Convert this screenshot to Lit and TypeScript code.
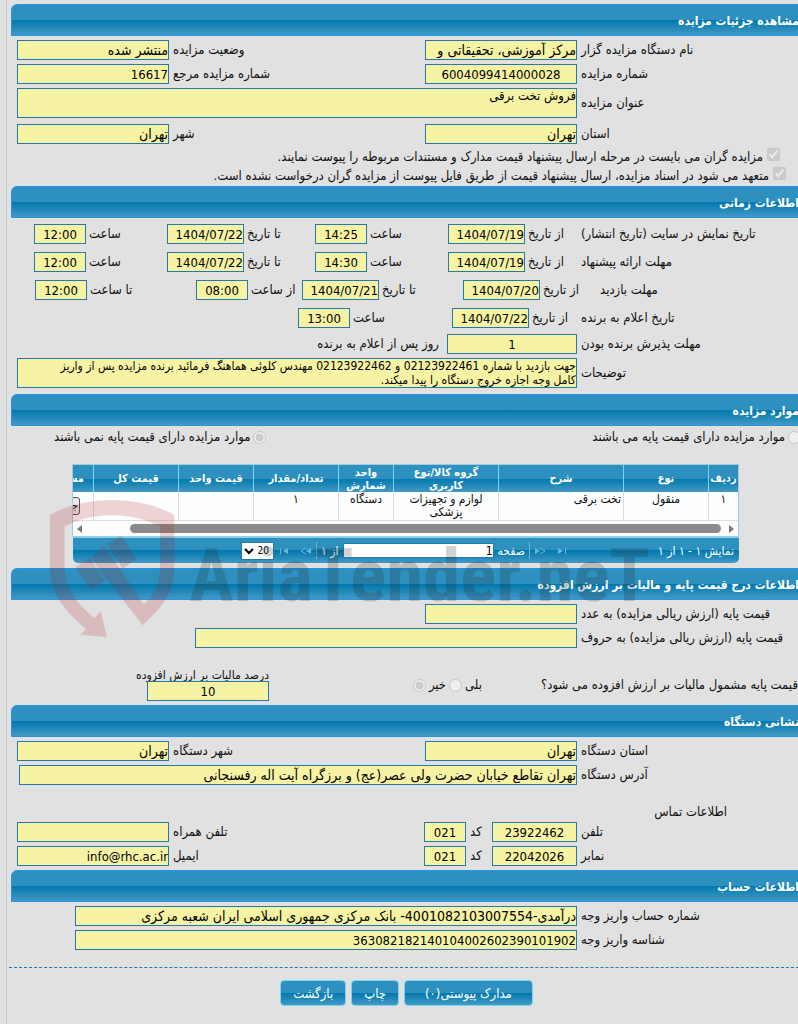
import { LitElement, html, css, svg } from 'lit'
import { customElement } from 'lit/decorators.js'

interface Column {
  title: string
  cls: string
  value: string
}

const columns: Column[] = [
  { title: 'ردیف', cls: 'c-row', value: '۱' },
  { title: 'نوع', cls: 'c-type', value: 'منقول' },
  { title: 'شرح', cls: 'c-desc', value: 'تخت برقی' },
  { title: 'گروه کالا/نوع کاربری', cls: 'c-group', value: 'لوازم و تجهیزات پزشکی' },
  { title: 'واحد شمارش', cls: 'c-unit', value: 'دستگاه' },
  { title: 'تعداد/مقدار', cls: 'c-count', value: '۱' },
  { title: 'قیمت واحد', cls: 'c-price', value: '' },
  { title: 'قیمت کل', cls: 'c-total', value: '' },
]

@customElement('app-root')
export class AppRoot extends LitElement {
  static styles = css`
    :host {
      display: block;
      direction: rtl;
      min-height: 100vh;
      box-sizing: border-box;
      overflow: hidden;
      background: #e1e1e1;
      color: #111;
      font-family: 'DejaVu Sans Condensed', 'DejaVu Sans', sans-serif;
      font-size: 13px;
      line-height: 16px;
    }

    * {
      box-sizing: border-box;
    }

    main {
      min-height: 100vh;
      margin-left: 6px;
      padding-top: 4px;
      border-left: 1px solid #c8c8c8;
    }

    section {
      position: relative;
      padding-bottom: 4px;
    }

    section.tight {
      padding-bottom: 2px;
    }

    h2 {
      height: 32px;
      margin: 0 -6px 2px 4px;
      padding-right: 4px;
      border: 1px solid #2694e8;
      border-radius: 6px 6px 0 0;
      background: linear-gradient(#2d90be 0 50%, #0078ae 50%, #4399c4);
      color: #fff;
      font-size: 12px;
      line-height: 32px;
      white-space: nowrap;
    }

    input,
    textarea,
    select,
    button {
      font-family: inherit;
      margin: 0;
    }

    .row {
      display: flex;
      align-items: center;
      min-height: 24px;
      padding-left: 10px;
      white-space: nowrap;
    }

    .row.area-row {
      min-height: 34px;
    }

    .row.title {
      margin-bottom: 2px;
    }

    .row.account {
      padding-left: 68px;
    }

    .row.words {
      padding-left: 188px;
    }

    .row.address {
      padding-left: 12px;
    }

    .lead {
      flex: 0 0 221px;
      padding-left: 4px;
      text-align: left;
    }

    .mid {
      flex: 1;
      padding-left: 4px;
      text-align: left;
    }

    .code {
      flex: 0 0 26px;
      padding-left: 4px;
      text-align: left;
    }

    .box {
      width: 152px;
      height: 20px;
      padding: 0;
      border: 1px solid #2779aa;
      border-radius: 0;
      outline: none;
      background: #f6f3a4;
      color: #000;
      font-size: 13px;
      line-height: 16px;
      resize: none;
    }

    .box.fa {
      font-size: 14px;
    }

    .box.wide {
      flex: 1;
      min-width: 0;
    }

    .box.mid-num {
      text-align: center;
    }

    .box.phone {
      width: 85px;
    }

    .box.area {
      width: 42px;
    }

    .box.days {
      width: 130px;
    }

    .box.date {
      width: 77px;
    }

    .box.time {
      width: 52px;
      text-align: center;
    }

    .box.email {
      direction: ltr;
      text-align: right;
    }

    textarea.box {
      height: 30px;
      line-height: 14px;
      overflow: hidden;
    }

    textarea.notes {
      padding-left: 24px;
      font-size: 12px;
    }

    .check {
      display: flex;
      align-items: flex-end;
      gap: 4px;
      height: 19px;
      padding-right: 18px;
      white-space: nowrap;
    }

    .check.second {
      padding-right: 12px;
    }

    .check input,
    .choice input {
      width: 13px;
      height: 13px;
      flex: none;
    }

    .check input {
      margin-bottom: 4px;
    }

    .times {
      display: grid;
      grid-template-columns: 217px 133fr 133fr 148fr 133fr;
      height: 28px;
      align-items: center;
      padding-left: 27px;
      white-space: nowrap;
    }

    .times.visit {
      grid-template-columns: 198px 137fr 161fr 106fr 161fr;
      padding-left: 28px;
    }

    .times.winner {
      grid-template-columns: 217px 129fr 154fr 291fr;
      padding-left: 0;
    }

    .times > .name {
      text-align: left;
    }

    .pair {
      display: flex;
      align-items: center;
      justify-content: flex-end;
      gap: 3px;
    }

    .after {
      padding-right: 8px;
    }

    .choices {
      display: flex;
      justify-content: space-between;
      height: 36px;
      margin-right: -3px;
      padding: 1px 0 0 47px;
    }

    .choice {
      display: flex;
      align-items: center;
      height: 16px;
      gap: 3px;
      white-space: nowrap;
    }

    .grid {
      margin: 0 59px 1px 65px;
    }

    .view {
      overflow: hidden;
      border: 1px solid #a6c9e2;
      background: #fcfdfd;
    }

    table {
      width: 730px;
      table-layout: fixed;
      border-collapse: separate;
      border-spacing: 0;
      font-size: 12px;
      line-height: 13px;
    }

    th {
      height: 27px;
      padding: 0;
      border-left: 1px solid #77d5f7;
      background: linear-gradient(#2d90be 0 50%, #0078ae 50%, #4399c4);
      color: #fff;
      font-size: 11px;
    }

    th.c-group {
      padding: 0 12px;
    }

    th.c-docs {
      padding-right: 9px;
      text-align: right;
    }

    td {
      height: 29px;
      padding: 1px 2px;
      border-left: 1px solid #ddd;
      border-bottom: 1px solid #ddd;
      text-align: center;
      vertical-align: top;
    }

    td.c-desc {
      text-align: right;
    }

    .c-row {
      width: 30px;
    }

    .c-type,
    .c-count,
    .c-total,
    .c-docs {
      width: 85px;
    }

    .c-desc {
      width: 125px;
    }

    .c-group {
      width: 105px;
    }

    .c-unit {
      width: 55px;
    }

    .c-price {
      width: 75px;
    }

    td.c-docs {
      padding: 5px 13px 0 0;
      text-align: right;
    }

    .details {
      width: 60px;
      height: 18px;
      padding: 0 1px;
      border: 1px solid #555;
      border-radius: 3px;
      background: #e9e9e9;
      color: #000;
      font-size: 11px;
      line-height: 14px;
      text-align: right;
    }

    .scroll {
      display: flex;
      align-items: center;
      height: 15px;
      padding: 0 4px;
      gap: 7px;
      direction: ltr;
    }

    .scroll svg {
      flex: none;
    }

    .thumb {
      flex: 1;
      height: 9px;
      margin-left: 40px;
      border-radius: 5px;
      background: #8b8b8b;
    }

    .pager {
      display: flex;
      align-items: center;
      height: 26px;
      margin-left: 1px;
      padding-right: 5px;
      border-top: 1px solid #77d5f7;
      border-radius: 0 0 5px 5px;
      background: linear-gradient(#2d90be 0 50%, #0078ae 50%, #4399c4);
      color: #fff;
      font-size: 12px;
      white-space: nowrap;
    }

    .nav {
      display: flex;
      align-items: center;
      gap: 4px;
      margin: 0 auto;
      padding-left: 78px;
    }

    .arrow {
      display: flex;
      padding: 0;
      border: 0;
      background: none;
      color: #6cb4d8;
    }

    .arrow + .arrow {
      margin-right: 6px;
    }

    .bar {
      width: 1px;
      height: 17px;
      background: #6cb4d8;
    }

    .page {
      width: 151px;
      height: 15px;
      padding: 0;
      border: 1px solid #2779aa;
      font-size: 12px;
    }

    .size {
      width: 33px;
      height: 18px;
      padding: 0;
      border: 1px solid #2779aa;
      background: #fff;
      color: #000;
      font-size: 10px;
    }

    .mark {
      position: absolute;
      left: 33px;
      bottom: -77px;
      z-index: 1;
      pointer-events: none;
    }

    .tax {
      display: flex;
      margin-top: 19px;
      white-space: nowrap;
    }

    .question {
      flex: 0 0 251px;
      padding-top: 8px;
      display: flex;
      justify-content: flex-end;
    }

    .answers {
      display: flex;
      gap: 3px;
      flex: 1;
      padding: 8px 59px 0 0;
    }

    .percent {
      display: flex;
      flex-direction: column;
      width: 122px;
      margin-left: 140px;
      line-height: 12px;
    }

    .percent label {
      font-size: 12px;
    }

    .percent .box {
      width: 100%;
    }

    h3 {
      margin: 0;
      padding: 17px 71px 0 0;
      height: 33px;
      font-size: 13px;
      font-weight: normal;
    }

    .actions {
      display: flex;
      justify-content: center;
      gap: 5px;
      margin: 11px -6px 0 2px;
      padding: 12px 0;
      border-top: 1px dashed #2779aa;
    }

    .actions button {
      height: 26px;
      padding: 0 12px;
      border: 1px solid #77d5f7;
      border-radius: 4px;
      background: linear-gradient(#2d90be 0 50%, #0078ae 50%, #4399c4);
      color: #fff;
      font-size: 13px;
    }

    .actions .attach {
      padding: 0 20px;
    }
  `

  private box(id: string, value: string, cls = '') {
    const script = /[آ-ی]/.test(value) ? 'fa' : ''
    return html`<input class="box ${script} ${cls}" id=${id} type="text" readonly .value=${value}>`
  }

  private pair(id: string, label: string, value: string, cls: string) {
    return html`
      <div class="pair">
        <label for=${id}>${label}</label>
        ${this.box(id, value, cls)}
      </div>
    `
  }

  private twoFields(id: string, first: string[], second: string[], cls: string[] = ['', '']) {
    return html`
      <div class="row">
        <label class="lead" for="${id}-a">${first[0]}</label>
        ${this.box(`${id}-a`, first[1], cls[0])}
        <label class="mid" for="${id}-b">${second[0]}</label>
        ${this.box(`${id}-b`, second[1], cls[1])}
      </div>
    `
  }

  private wideField(id: string, label: string, value: string, cls = '') {
    return html`
      <div class="row ${cls}">
        <label class="lead" for=${id}>${label}</label>
        ${this.box(id, value, 'wide')}
      </div>
    `
  }

  private phoneField(id: string, phone: string[], code: string, other: string[], cls = '') {
    return html`
      <div class="row">
        <label class="lead" for="${id}-n">${phone[0]}</label>
        ${this.box(`${id}-n`, phone[1], 'phone mid-num')}
        <label class="code" for="${id}-c">کد</label>
        ${this.box(`${id}-c`, code, 'area mid-num')}
        <label class="mid" for="${id}-o">${other[0]}</label>
        ${this.box(`${id}-o`, other[1], cls)}
      </div>
    `
  }

  private arrow(label: string, shape: unknown) {
    return html`
      <button class="arrow" type="button" aria-label=${label}>
        <svg width="12" height="8" viewBox="0 0 12 8" fill="currentColor" stroke="currentColor">${shape}</svg>
      </button>
    `
  }

  private renderItems() {
    return html`
      <div class="grid">
        <div class="view">
          <table>
            <thead>
              <tr>
                ${columns.map(c => html`<th class=${c.cls}>${c.title}</th>`)}
                <th class="c-docs">مستندات</th>
              </tr>
            </thead>
            <tbody>
              <tr>
                ${columns.map(c => html`<td class=${c.cls}>${c.value}</td>`)}
                <td class="c-docs"><button class="details" type="button">جزئیات</button></td>
              </tr>
            </tbody>
          </table>
          <div class="scroll">
            <svg width="6" height="10" viewBox="0 0 6 10"><path d="M5 1v8L0 5z" fill="#777"/></svg>
            <div class="thumb"></div>
            <svg width="6" height="10" viewBox="0 0 6 10"><path d="M1 1v8l5-4z" fill="#777"/></svg>
          </div>
        </div>
        <div class="pager">
          <span>نمایش ۱ - ۱ از ۱</span>
          <div class="nav">
            ${this.arrow('اولین صفحه', svg`<path d="M2 1v6l5-3z" stroke="none"/><path d="M9.500 1v6" fill="none"/>`)}
            ${this.arrow('صفحه قبل', svg`<path d="M1 1v6l5-3z" stroke="none"/><path d="M6 1l5 3-5 3" fill="none"/>`)}
            <span class="bar"></span>
            <label for="page">صفحه</label>
            <input class="page" id="page" type="text" .value=${'1'}>
            <span>از ۱</span>
            <span class="bar"></span>
            ${this.arrow('صفحه بعد', svg`<path d="M11 1v6l-5-3z" stroke="none"/><path d="M6 1l-5 3 5 3" fill="none"/>`)}
            ${this.arrow('آخرین صفحه', svg`<path d="M10 1v6l-5-3z" stroke="none"/><path d="M2.500 1v6" fill="none"/>`)}
            <select class="size" aria-label="تعداد در صفحه">
              <option>20</option>
            </select>
          </div>
        </div>
      </div>
    `
  }

  // shield and wordmark laid over the grid and the heading below it
  private renderMark() {
    return html`
      <svg class="mark" width="620" height="155" viewBox="0 0 620 155" direction="ltr" aria-hidden="true">
        <g transform="scale(.33333)" fill="#b4141e" fill-opacity=".18">
          <path d="M30 75Q110 30 216 30T403 75V235C403 300 375 345 308 406L201 268L192 262L153 202L192 167L243 240L311 344C345 310 360 280 360 230V109Q290 75 216 75T74 109V235C74 290 105 335 163 385L182 364L201 441L122 434L137 417C60 350 30 300 30 235Z"/>
          <path d="M106 232L149 202L195 273L153 301Z"/>
          <path d="M201 164L243 137L290 206L248 236Z"/>
        </g>
        <text class="brand" x="149" y="111" fill="#222" fill-opacity=".2" font-family="'Liberation Sans Narrow', 'Roboto Condensed', sans-serif" font-weight="700" font-size="75" style="direction:ltr">AriaTender.neT</text>
      </svg>
    `
  }

  render() {
    return html`
      <main>
        <section class="tight">
          <h2>مشاهده جزئیات مزایده</h2>
          ${this.twoFields('org', ['نام دستگاه مزایده گزار', 'مرکز آموزشی، تحقیقاتی و'], ['وضعیت مزایده', 'منتشر شده'])}
          ${this.twoFields('num', ['شماره مزایده', '6004099414000028'], ['شماره مزایده مرجع', '16617'], ['mid-num', ''])}
          <div class="row area-row title">
            <label class="lead" for="title">عنوان مزایده</label>
            <textarea class="box wide" id="title" readonly .value=${'فروش تخت برقی'}></textarea>
          </div>
          ${this.twoFields('place', ['استان', 'تهران'], ['شهر', 'تهران'])}
          <label class="check"><input type="checkbox" checked disabled>مزایده گران می بایست در مرحله ارسال پیشنهاد قیمت مدارک و مستندات مربوطه را پیوست نمایند.</label>
          <label class="check second"><input type="checkbox" checked disabled>متعهد می شود در اسناد مزایده، ارسال پیشنهاد قیمت از طریق فایل پیوست از مزایده گران درخواست نشده است.</label>
        </section>

        <section>
          <h2>اطلاعات زمانی</h2>
          <div class="times">
            <span class="name">تاریخ نمایش در سایت (تاریخ انتشار)</span>
            ${this.pair('show-from', 'از تاریخ', '1404/07/19', 'date')}
            ${this.pair('show-from-h', 'ساعت', '14:25', 'time')}
            ${this.pair('show-to', 'تا تاریخ', '1404/07/22', 'date')}
            ${this.pair('show-to-h', 'ساعت', '12:00', 'time')}
          </div>
          <div class="times">
            <span class="name">مهلت ارائه پیشنهاد</span>
            ${this.pair('offer-from', 'از تاریخ', '1404/07/19', 'date')}
            ${this.pair('offer-from-h', 'ساعت', '14:30', 'time')}
            ${this.pair('offer-to', 'تا تاریخ', '1404/07/22', 'date')}
            ${this.pair('offer-to-h', 'ساعت', '12:00', 'time')}
          </div>
          <div class="times visit">
            <span class="name">مهلت بازدید</span>
            ${this.pair('visit-from', 'از تاریخ', '1404/07/20', 'date')}
            ${this.pair('visit-to', 'تا تاریخ', '1404/07/21', 'date')}
            ${this.pair('visit-from-h', 'از ساعت', '08:00', 'time')}
            ${this.pair('visit-to-h', 'تا ساعت', '12:00', 'time')}
          </div>
          <div class="times winner">
            <span class="name">تاریخ اعلام به برنده</span>
            ${this.pair('winner-date', 'از تاریخ', '1404/07/22', 'date')}
            ${this.pair('winner-h', 'ساعت', '13:00', 'time')}
          </div>
          <div class="row">
            <label class="lead" for="accept">مهلت پذیرش برنده بودن</label>
            ${this.box('accept', '1', 'days mid-num')}
            <span class="after">روز پس از اعلام به برنده</span>
          </div>
          <div class="row area-row">
            <label class="lead" for="notes">توضیحات</label>
            <textarea class="box wide notes" id="notes" readonly .value=${'جهت بازدید با شماره 02123922461 و 02123922462 مهندس کلوئی هماهنگ فرمائید برنده مزایده پس از واریز کامل وجه اجازه خروج دستگاه را پیدا میکند.'}></textarea>
          </div>
        </section>

        <section>
          <h2>موارد مزایده</h2>
          <div class="choices">
            <label class="choice"><input type="radio" name="base" disabled>موارد مزایده دارای قیمت پایه می باشند</label>
            <label class="choice"><input type="radio" name="base" checked disabled>موارد مزایده دارای قیمت پایه نمی باشند</label>
          </div>
          ${this.renderItems()}
          ${this.renderMark()}
        </section>

        <section>
          <h2>اطلاعات درج قیمت پایه و مالیات بر ارزش افزوده</h2>
          <div class="row">
            <label class="lead" for="base-num">قیمت پایه (ارزش ریالی مزایده) به عدد</label>
            ${this.box('base-num', '')}
          </div>
          ${this.wideField('base-words', 'قیمت پایه (ارزش ریالی مزایده) به حروف', '', 'words')}
          <div class="tax">
            <span class="question">قیمت پایه مشمول مالیات بر ارزش افزوده می شود؟</span>
            <div class="answers">
              <label class="choice">بلی<input type="radio" name="tax" disabled></label>
              <label class="choice">خیر<input type="radio" name="tax" checked disabled></label>
            </div>
            <div class="percent">
              <label for="percent">درصد مالیات بر ارزش افزوده</label>
              ${this.box('percent', '10', 'mid-num')}
            </div>
          </div>
        </section>

        <section class="tight">
          <h2>نشانی دستگاه</h2>
          ${this.twoFields('office', ['استان دستگاه', 'تهران'], ['شهر دستگاه', 'تهران'])}
          ${this.wideField('address', 'آدرس دستگاه', 'تهران تقاطع خیابان حضرت ولی عصر(عج) و برزگراه آیت اله رفسنجانی', 'address')}
          <h3>اطلاعات تماس</h3>
          ${this.phoneField('tel', ['تلفن', '23922462'], '021', ['تلفن همراه', ''])}
          ${this.phoneField('fax', ['نمابر', '22042026'], '021', ['ایمیل', 'info@rhc.ac.ir'], 'email')}
        </section>

        <section>
          <h2>اطلاعات حساب</h2>
          ${this.wideField('account', 'شماره حساب واریز وجه', 'درآمدی-4001082103007554- بانک مرکزی جمهوری اسلامی ایران شعبه مرکزی', 'account')}
          ${this.wideField('deposit', 'شناسه واریز وجه', '363082182140104002602390101902', 'account')}
        </section>

        <div class="actions">
          <button class="attach" type="button">مدارک پیوستی(۰)</button>
          <button type="button">چاپ</button>
          <button type="button">بازگشت</button>
        </div>
      </main>
    `
  }
}
